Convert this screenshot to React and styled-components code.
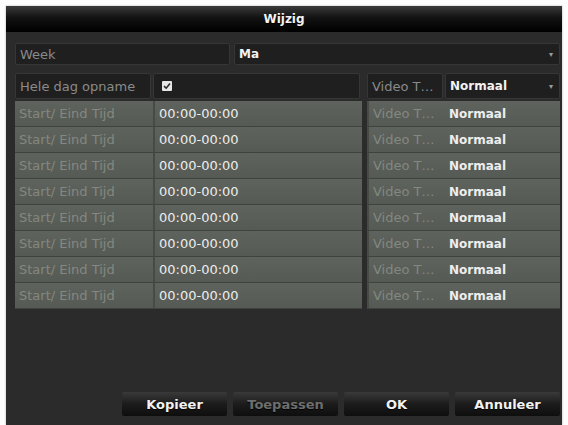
import React from "react"
import styled, { createGlobalStyle } from "styled-components"

const GlobalStyle = createGlobalStyle`
  html, body {
    margin: 0;
    padding: 0;
    background: #fdfdfd;
  }
  body {
    font-family: "DejaVu Sans", Verdana, sans-serif;
    font-size: 13px;
  }
`

const rows = Array.from({ length: 8 }, (_, i) => i)

const App = () => (
  <React.Fragment>
    <GlobalStyle />
    <Dialog>
      <TitleBar>Wijzig</TitleBar>
      <Body>
        <WeekRow>
          <DarkCell muted>Week</DarkCell>
          <DarkCell bold>
            Ma
            <Arrow>▾</Arrow>
          </DarkCell>
        </WeekRow>

        <Grid>
          <DarkCell muted>Hele dag opname</DarkCell>
          <DarkCell>
            <Check>
              <svg width="8" height="8" viewBox="0 0 8 8">
                <path d="M1 4.2 L3.2 6.2 L7 1.6" stroke="#2a2a2a" strokeWidth="1.6" fill="none" />
              </svg>
            </Check>
          </DarkCell>
          <Spacer />
          <DarkCell muted>Video T…</DarkCell>
          <DarkCell bold>
            Normaal
            <Arrow>▾</Arrow>
          </DarkCell>
        </Grid>

        <Table>
          {rows.map(i => (
            <Grid key={i}>
              <GreyCell faded>Start/ Eind Tijd</GreyCell>
              <GreyCell split>00:00-00:00</GreyCell>
              <Spacer />
              <GreyCell faded split>Video T…</GreyCell>
              <GreyCell bold>Normaal</GreyCell>
            </Grid>
          ))}
        </Table>

        <Footer>
          <Button>Kopieer</Button>
          <Button disabled>Toepassen</Button>
          <Button>OK</Button>
          <Button>Annuleer</Button>
        </Footer>
      </Body>
    </Dialog>
  </React.Fragment>
)

const Dialog = styled.div`
  margin: 6px 0 0 6px;
  width: 556px;
  height: 419px;
  background: #2b2b2b;
  display: flex;
  flex-direction: column;
  box-shadow: 0 0 2px rgba(0, 0, 0, 0.3);
`

const TitleBar = styled.div`
  height: 26px;
  flex: none;
  display: flex;
  align-items: center;
  justify-content: center;
  background: linear-gradient(#3a3a3a, #121212 45%, #000);
  color: #f4f4f4;
  font-weight: bold;
  font-size: 12px;
  text-shadow: 0 1px 1px #000;
`

const Body = styled.div`
  flex: 1;
  display: flex;
  flex-direction: column;
  padding: 11px 2px 0 9px;
`

const WeekRow = styled.div`
  display: grid;
  grid-template-columns: 217px 1fr;
  column-gap: 2px;
  height: 22px;
  margin-bottom: 8px;
`

const Grid = styled.div`
  display: grid;
  grid-template-columns: 138px 209px 5px 78px 1fr;
  height: 26px;
`

const DarkCell = styled.div`
  position: relative;
  display: flex;
  align-items: center;
  padding: 0 4px;
  margin-right: 2px;
  background: #1f1f1f;
  border: 1px solid #363636;
  border-radius: 2px;
  color: ${p => (p.muted ? "#8a8a8a" : "#f2f2f2")};
  font-weight: ${p => (p.bold ? "bold" : "normal")};
  font-size: ${p => (p.bold ? "12px" : "13px")};
  white-space: nowrap;
  &:last-child {
    margin-right: 0;
  }
`

const Arrow = styled.span`
  position: absolute;
  right: 6px;
  top: 50%;
  transform: translateY(-50%);
  color: #9a9a9a;
  font-size: 8px;
`

const Check = styled.span`
  width: 10px;
  height: 10px;
  margin-left: 4px;
  background: #e6e6e6;
  border-radius: 1px;
  display: flex;
  align-items: center;
  justify-content: center;
`

const Spacer = styled.div`
  background: transparent;
`

const Table = styled.div`
  margin-top: 2px;
  display: flex;
  flex-direction: column;
`

const GreyCell = styled.div`
  display: flex;
  align-items: center;
  padding: 0 4px;
  background: linear-gradient(#5f635d, #565a54);
  border-bottom: 1px solid #3f423d;
  border-left: ${p => (p.split ? "2px solid #474a45" : "none")};
  color: ${p => (p.faded ? "#838880" : "#ededed")};
  font-weight: ${p => (p.bold ? "bold" : "normal")};
  font-size: ${p => (p.bold ? "12px" : "13px")};
  white-space: nowrap;
`

const Footer = styled.div`
  margin-top: auto;
  margin-bottom: 9px;
  display: flex;
  justify-content: flex-end;
  gap: 6px;
`

const Button = styled.button`
  width: 105px;
  height: 24px;
  border: none;
  border-radius: 2px;
  background: linear-gradient(#3a3a3a, #1c1c1c 50%, #0e0e0e);
  color: ${p => (p.disabled ? "#6e6e6e" : "#f2f2f2")};
  font-family: "DejaVu Sans", Verdana, sans-serif;
  font-weight: bold;
  font-size: 13px;
  text-shadow: 0 1px 1px #000;
`

export default App
